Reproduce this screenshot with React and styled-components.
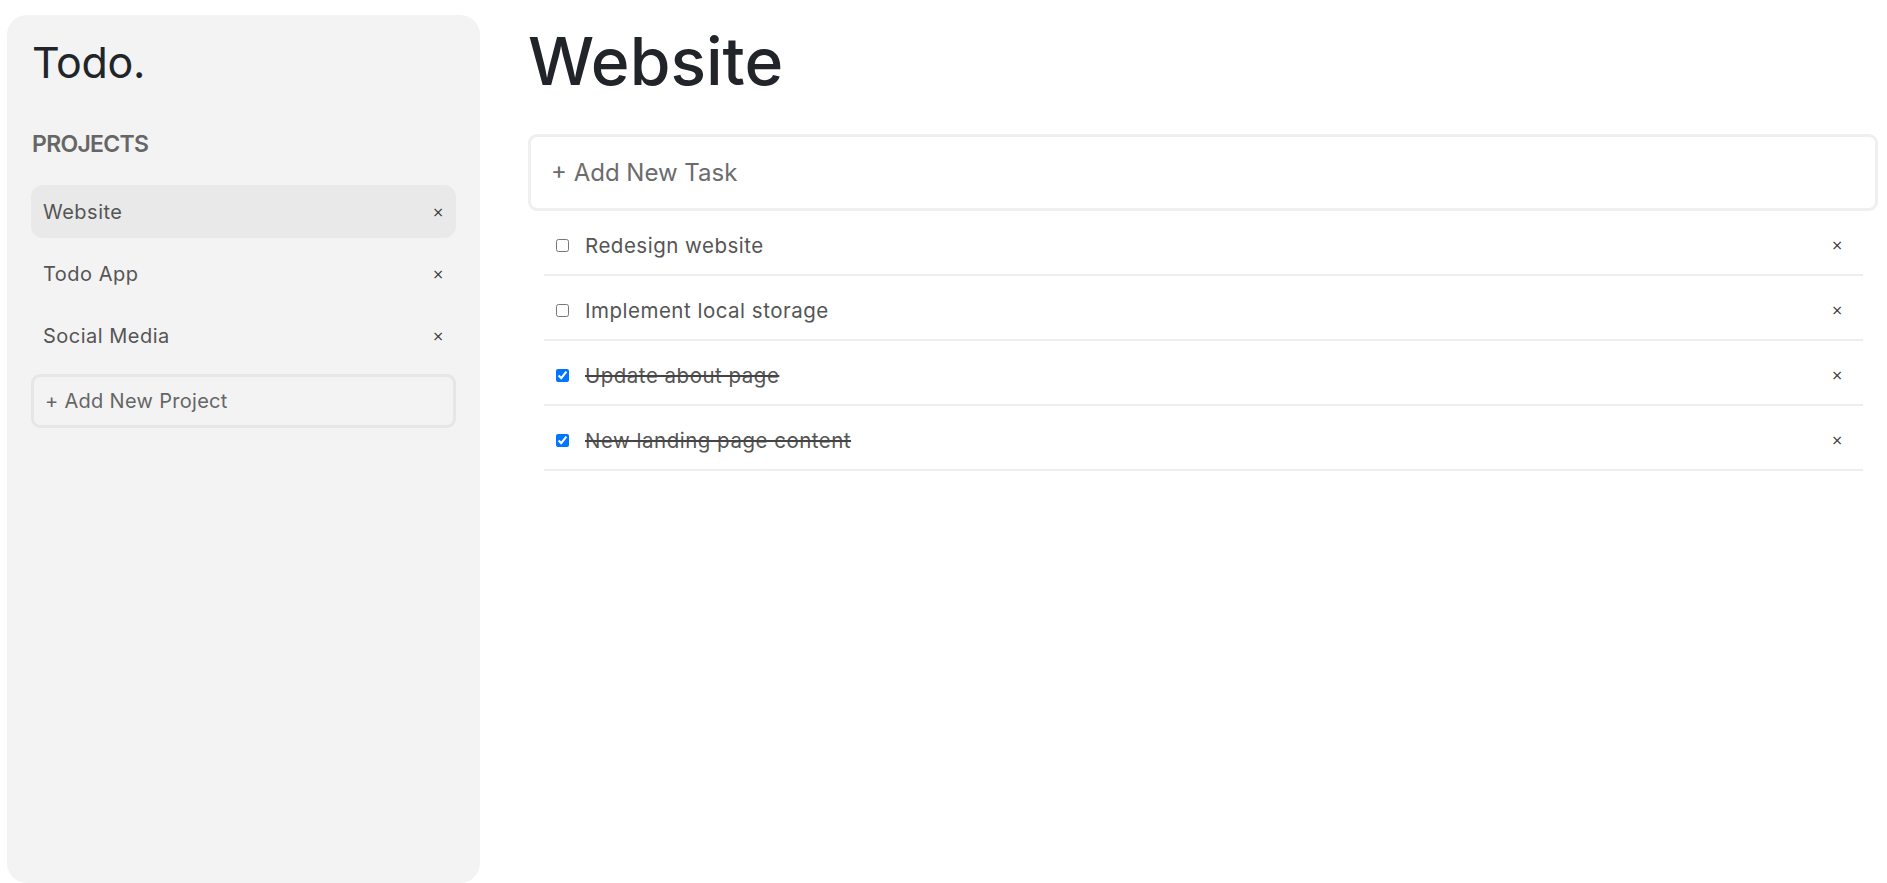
import React from "react";
import styled, { createGlobalStyle } from "styled-components";

const GlobalStyle = createGlobalStyle`
  * { box-sizing: border-box; }
  html, body { margin: 0; padding: 0; background: #ffffff; }
  body {
    font-family: Inter, "Open Sans", "Liberation Sans", sans-serif;
    color: #212529;
    overflow: hidden;
  }
`;

const Layout = styled.div`
  display: flex;
  align-items: flex-start;
  height: 100vh;
`;

const Sidebar = styled.aside`
  flex: 0 0 473px;
  height: calc(100vh - 15px);
  margin: 15px 0 0 7px;
  padding: 22px 24px 0 24px;
  background: #f3f3f3;
  border-radius: 20px;
  display: flex;
  flex-direction: column;
`;

const Logo = styled.h1`
  margin: 0 0 0 1px;
  font-size: 43px;
  line-height: 1.2;
  font-weight: 400;
  letter-spacing: -0.3px;
  color: #212529;
`;

const SectionTitle = styled.h2`
  margin: 41px 0 27px 1px;
  font-size: 23px;
  line-height: 1.25;
  font-weight: 600;
  color: #666;
  letter-spacing: -0.7px;
`;

const ProjectList = styled.ul`
  list-style: none;
  margin: 0;
  padding: 0;
  display: flex;
  flex-direction: column;
  gap: 9px;
`;

const ProjectItem = styled.li`
  height: 53px;
  display: flex;
  align-items: center;
  justify-content: space-between;
  padding: 0 10px 0 12px;
  border-radius: 12px;
  background: ${(p) => (p.$active ? "#e9e9e9" : "transparent")};
  font-size: 20px;
  letter-spacing: 0.5px;
  color: #555;
`;

const RemoveButton = styled.button`
  border: 0;
  background: transparent;
  padding: 0 2px;
  font-family: "DejaVu Sans", sans-serif;
  font-size: 14px;
  line-height: 1;
  color: #333;
  cursor: pointer;
`;

const ProjectInput = styled.input`
  margin-top: 12px;
  height: 54px;
  width: 100%;
  padding: 0 11px;
  border: 3px solid #e6e6e6;
  border-radius: 9px;
  background: #f3f3f3;
  font-family: inherit;
  font-size: 20px;
  letter-spacing: 0.3px;
  outline: none;
  &::placeholder { color: #666; }
`;

const Main = styled.main`
  flex: 1;
  margin: 0 9px 0 48px;
  padding-top: 22px;
  display: flex;
  flex-direction: column;
`;

const Title = styled.h1`
  margin: 0 0 33px 0;
  font-size: 66px;
  line-height: 1.2;
  font-weight: 500;
  letter-spacing: 0;
  color: #212529;
`;

const TaskInput = styled.input`
  height: 77px;
  width: 100%;
  padding: 0 20px;
  border: 3px solid #efefef;
  border-radius: 9px;
  background: #fff;
  font-family: inherit;
  font-size: 24px;
  outline: none;
  &::placeholder { color: #6c6c6c; }
`;

const TaskList = styled.ul`
  list-style: none;
  margin: 0 15px 0 16px;
  padding: 0;
`;

const TaskRow = styled.li`
  height: 65px;
  padding: 5px 18px 0 12px;
  display: flex;
  align-items: center;
  border-bottom: 2px solid #eeeeee;
`;

const Check = styled.input.attrs({ type: "checkbox" })`
  width: 13px;
  height: 13px;
  margin: 0 16px 0 0;
  flex: 0 0 auto;
`;

const TaskText = styled.span`
  flex: 1;
  font-size: 20.5px;
  letter-spacing: 0.5px;
  color: #555;
  text-decoration: ${(p) => (p.$done ? "line-through" : "none")};
  text-decoration-color: #444;
`;

const projects = [
  { name: "Website", active: true },
  { name: "Todo App" },
  { name: "Social Media" },
];

const tasks = [
  { text: "Redesign website", done: false },
  { text: "Implement local storage", done: false },
  { text: "Update about page", done: true },
  { text: "New landing page content", done: true },
];

export default function App() {
  return (
    <>
      <GlobalStyle />
      <Layout>
        <Sidebar>
          <Logo>Todo.</Logo>
          <SectionTitle>PROJECTS</SectionTitle>
          <ProjectList>
            {projects.map((p) => (
              <ProjectItem key={p.name} $active={p.active}>
                <span>{p.name}</span>
                <RemoveButton>×</RemoveButton>
              </ProjectItem>
            ))}
          </ProjectList>
          <ProjectInput placeholder="+ Add New Project" />
        </Sidebar>
        <Main>
          <Title>Website</Title>
          <TaskInput placeholder="+ Add New Task" />
          <TaskList>
            {tasks.map((t) => (
              <TaskRow key={t.text}>
                <Check defaultChecked={t.done} />
                <TaskText $done={t.done}>{t.text}</TaskText>
                <RemoveButton>×</RemoveButton>
              </TaskRow>
            ))}
          </TaskList>
        </Main>
      </Layout>
    </>
  );
}
